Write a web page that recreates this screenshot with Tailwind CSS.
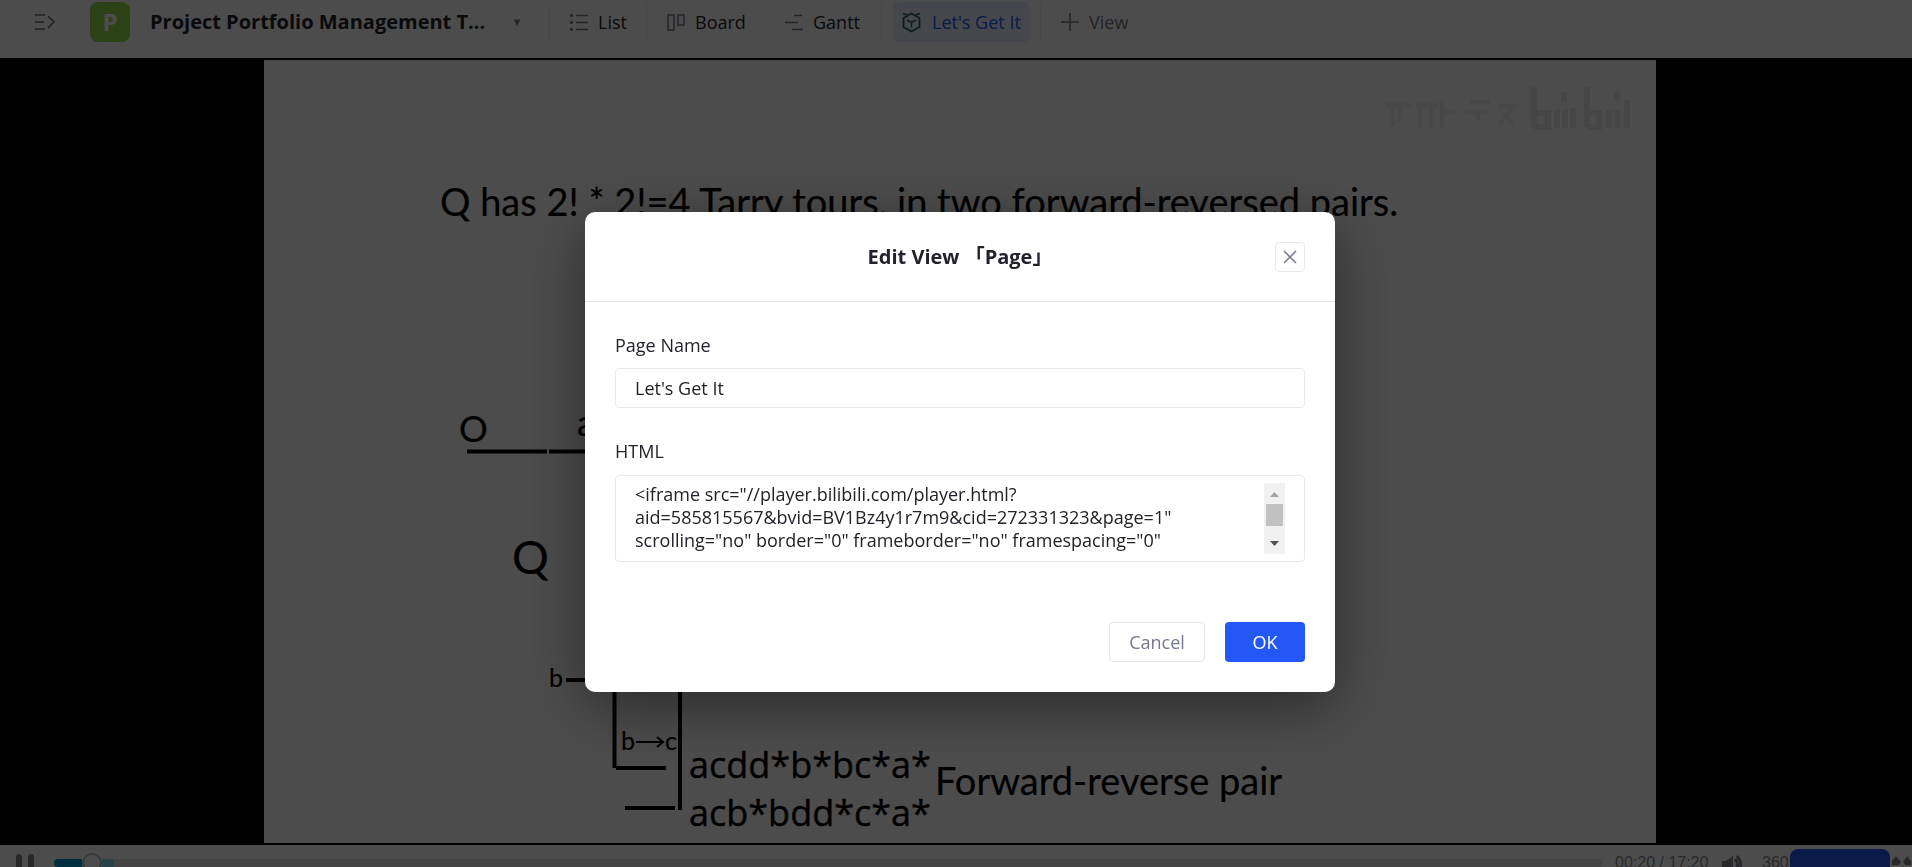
<!DOCTYPE html>
<html lang="en">
<head>
    <meta charset="UTF-8">
    <meta name="viewport" content="width=device-width, initial-scale=1.0">
    <script src="https://cdn.jsdelivr.net/npm/@tailwindcss/browser@4"></script>
    <title>Project Portfolio Management</title>
</head>
<body class="font-['Open_Sans','Noto_Sans_CJK_SC',sans-serif] text-[18px] text-[#22222c]">
<div class="flex h-screen flex-col overflow-hidden bg-black">

  <!-- top bar -->
  <header class="flex h-[58px] shrink-0 items-start bg-white pt-[2px]">
    <div class="flex h-10 items-center pl-[34px]">
      <button type="button" aria-label="Expand sidebar">
        <svg class="h-5 w-[22px]" viewBox="0 0 22 20" fill="none" stroke="#6b6b78" stroke-width="1.6"><path d="M1 3h10M1 10h9M1 17h10M14 4l6 6-6 6"/></svg>
      </button>
      <div class="ml-[34px] flex size-10 items-center justify-center rounded-lg bg-[#8fdc4b] text-[24px] font-bold text-white">P</div>
      <h1 class="ml-5 w-[343px] truncate text-[20px] font-bold">Project Portfolio Management T...</h1>
      <svg class="ml-5 h-[7px] w-2" viewBox="0 0 8 7"><path d="M0.500 0.500h7L4 7z" fill="#80808c"/></svg>
    </div>
    <nav class="ml-7 flex h-10 items-center">
      <a href="#" class="flex h-9 items-center gap-[10px] border-l border-[#ececf2] px-5">
        <svg class="h-[17px] w-[18px]" viewBox="0 0 18 17" fill="none" stroke="#77778a" stroke-width="1.5"><path d="M0 1.5h3M0 8.5h3M0 15.5h3" stroke-width="2.5"/><path d="M6 1.5h12M6 8.5h12M6 15.5h12"/></svg>
        <span class="w-[28px] whitespace-nowrap">List</span>
      </a>
      <a href="#" class="flex h-9 items-center gap-[10px] border-l border-[#ececf2] px-5">
        <svg class="h-[17px] w-[18px]" viewBox="0 0 18 17" fill="none" stroke="#77778a" stroke-width="1.5"><path d="M1 1h6v15H1zM11 1h6v10h-6z"/></svg>
        <span class="w-[49px] whitespace-nowrap">Board</span>
      </a>
      <a href="#" class="flex h-9 items-center gap-[10px] border-l border-[#ececf2] px-5">
        <svg class="h-[17px] w-[18px]" viewBox="0 0 18 17" fill="none" stroke="#77778a" stroke-width="1.5"><path d="M9 1.5h8M0 8.5h13M7 15.5h11"/></svg>
        <span class="w-[48px] whitespace-nowrap">Gantt</span>
      </a>
      <div class="flex h-9 items-center border-x border-[#ececf2] px-[11px]">
        <a href="#" class="flex h-10 items-center gap-[10px] rounded bg-[#e9effd] px-2 text-[#2458f6]">
          <svg class="h-[22px] w-[21px]" viewBox="0 0 21 22" fill="none" stroke="#2f5580" stroke-width="1.8"><path d="M10.5 2.5l8 4.500v9l-8 4.500-8-4.500V7z"/><path d="M6 9l4.500 2.500L15 9M10.5 11.500V16.500M2 2.500l4 1.500M19 2.500L15 4" stroke-width="1.5"/></svg>
          <span class="w-[89px] whitespace-nowrap">Let's Get It</span>
        </a>
      </div>
      <button type="button" class="flex h-9 items-center gap-[10px] pl-5 text-[#77778a]">
        <svg class="size-[18px]" viewBox="0 0 18 18" fill="none" stroke="currentColor" stroke-width="1.6"><path d="M9 0v18M0 9h18"/></svg>
        View
      </button>
    </nav>
  </header>

  <!-- embedded video -->
  <main class="flex min-h-0 flex-1 justify-center py-[2px] pl-2">
    <svg class="h-full bg-white" viewBox="0 0 1392 783" fill="#000">
      <g fill="none" stroke="#f1f1f1" stroke-width="4">
        <path d="M1122 45h26M1128 42v25M1136 42v20M1152 45h22M1156 42v25M1167 42v25M1178 42v25M1180 52h14M1206 42h20M1200 52h24M1214 52v8M1234 46h16l-14 18M1238 54l12 10"/>
      </g>
      <g fill="none" stroke="#ebebeb" stroke-width="6">
        <path d="M1270 27v40M1270 53h14v14h-14M1300 32v10M1293 50v18M1301 50v18M1309 48v20M1323 27v40M1323 53h12v14h-12M1353 31v10M1345 50v18M1353 50v18M1363 40v28"/>
      </g>
      <g font-family="Lato, sans-serif" font-size="38" stroke="#000" stroke-width="0.2">
        <text x="176" y="156">Q has 2! * 2!=4 Tarry tours, in two forward-reversed pairs.</text>
        <text x="195" y="382" font-size="36">O</text>
        <text x="313" y="376" font-size="36">a</text>
        <text x="248" y="514" font-size="46">Q</text>
        <text x="285" y="627" font-size="25">b</text>
        <text x="357" y="690" font-size="25">b</text>
        <text x="401" y="690" font-size="25">c</text>
        <text x="671" y="735">Forward-reverse pair</text>
      </g>
      <g font-family="Open Sans, sans-serif" font-size="36" stroke="#000" stroke-width="0.4">
        <text x="425" y="718">acdd*b*bc*a*</text>
        <text x="425" y="766">acb*bdd*c*a*</text>
      </g>
      <g fill="none" stroke="#000" stroke-width="4">
        <path d="M203 391.5h80M285 391.5h60M302 620h50M350.5 620v88M352 708h50M416 620v130M361 748h50"/>
        <path d="M372 682h26M393 677l6 5-6 5" stroke-width="2"/>
      </g>
    </svg>
  </main>

  <!-- player controls -->
  <div class="flex h-[22px] shrink-0 items-start overflow-hidden bg-white font-['Liberation_Sans',sans-serif] text-base text-[#8a8a92]">
    <div class="flex h-10 flex-1 items-start pl-4">
      <button type="button" aria-label="Pause" class="mt-[9px] flex h-5 gap-[6px]"><span class="h-5 w-[6px] rounded-full bg-[#85858d]"></span><span class="h-5 w-[6px] rounded-full bg-[#85858d]"></span></button>
      <div class="mt-2 ml-5 flex h-5 flex-1 items-center">
        <div class="h-2 w-7 rounded-l bg-[#00a1d6]"></div>
        <div class="size-5 shrink-0 rounded-full border-2 border-[#a8c2cc] bg-white"></div>
        <div class="h-2 w-3 bg-[#8adced]"></div>
        <div class="h-2 flex-1 rounded-r bg-[#e5e5e5]"></div>
      </div>
      <span class="mt-2 ml-3 w-[107px] leading-5 whitespace-pre">00:20 / 17:20</span>
      <svg class="mt-[10px] h-5 w-5" viewBox="0 0 20 20"><path d="M0 6h4l7-5v18l-7-5H0z" fill="#85858d"/><path d="M13 4q5 6 0 12M15 1q8 9 0 18" fill="none" stroke="#85858d" stroke-width="3"/></svg>
      <span class="mt-2 ml-5 w-7 overflow-hidden leading-5 whitespace-nowrap">360P</span>
    </div>
    <button type="button" aria-label="Open chat" class="mt-1 h-10 w-[100px] rounded-lg bg-[#2458f6]"></button>
    <svg class="mt-[10px] h-5 w-[22px]" viewBox="0 0 22 20" fill="#85858d"><path d="M6 1l5 6-2 3H2V6zM17 1l4 5v4h-6l-2-3z"/></svg>
  </div>
</div>

<!-- edit view dialog -->
<div class="fixed inset-0 flex items-start justify-center bg-black/70 pt-[212px]">
  <div role="dialog" aria-labelledby="dialogTitle" class="ml-2 w-[750px] rounded-[10px] bg-white shadow-[0_15px_60px_rgba(0,0,0,0.45)]">
    <div class="grid h-[90px] grid-cols-[30px_1fr_30px] items-center border-b border-[#e6e6e6] px-[30px]">
      <span></span>
      <h2 id="dialogTitle" class="text-center text-[20px] font-bold">Edit View 「Page」</h2>
      <button type="button" aria-label="Close" class="flex size-[30px] items-center justify-center rounded border border-[#e8e8ee]">
        <svg class="size-[14px]" viewBox="0 0 14 14" fill="none" stroke="#77778f" stroke-width="1.5"><path d="M1 1l12 12M13 1L1 13"/></svg>
      </button>
    </div>
    <form class="px-[30px] pt-[31px] pb-[30px]">
      <label for="pageName" class="block leading-6">Page Name</label>
      <input id="pageName" type="text" value="Let's Get It" class="mt-[11px] block h-10 w-full rounded border border-[#e8e8e8] px-[19px]">
      <label for="html" class="mt-[31px] block leading-6">HTML</label>
      <div class="mt-3 flex h-[87px] rounded border border-[#e8e8e8] px-[19px] py-[7px]">
        <textarea id="html" class="min-w-0 flex-1 resize-none overflow-hidden leading-[23px]">&lt;iframe src="//player.bilibili.com/player.html?
aid=585815567&amp;bvid=BV1Bz4y1r7m9&amp;cid=272331323&amp;page=1"
scrolling="no" border="0" frameborder="no" framespacing="0"</textarea>
        <div class="flex w-[21px] flex-col items-center bg-[#f1f1f1]">
          <svg class="size-[21px]" viewBox="0 0 21 21"><path d="M6 14h9l-4.5-5z" fill="#a3a3a3"/></svg>
          <div class="h-[22px] w-[17px] bg-[#c1c1c1]"></div>
          <svg class="mt-auto size-[21px]" viewBox="0 0 21 21"><path d="M6 8h9l-4.5 5z" fill="#505050"/></svg>
        </div>
      </div>
      <div class="mt-[60px] flex justify-end gap-5">
        <button type="button" class="h-10 w-24 rounded border border-[#e6e6e6] text-[#77778f]">Cancel</button>
        <button type="submit" class="h-10 w-20 rounded bg-[#2458f6] text-white">OK</button>
      </div>
    </form>
  </div>
</div>
</body>
</html>
